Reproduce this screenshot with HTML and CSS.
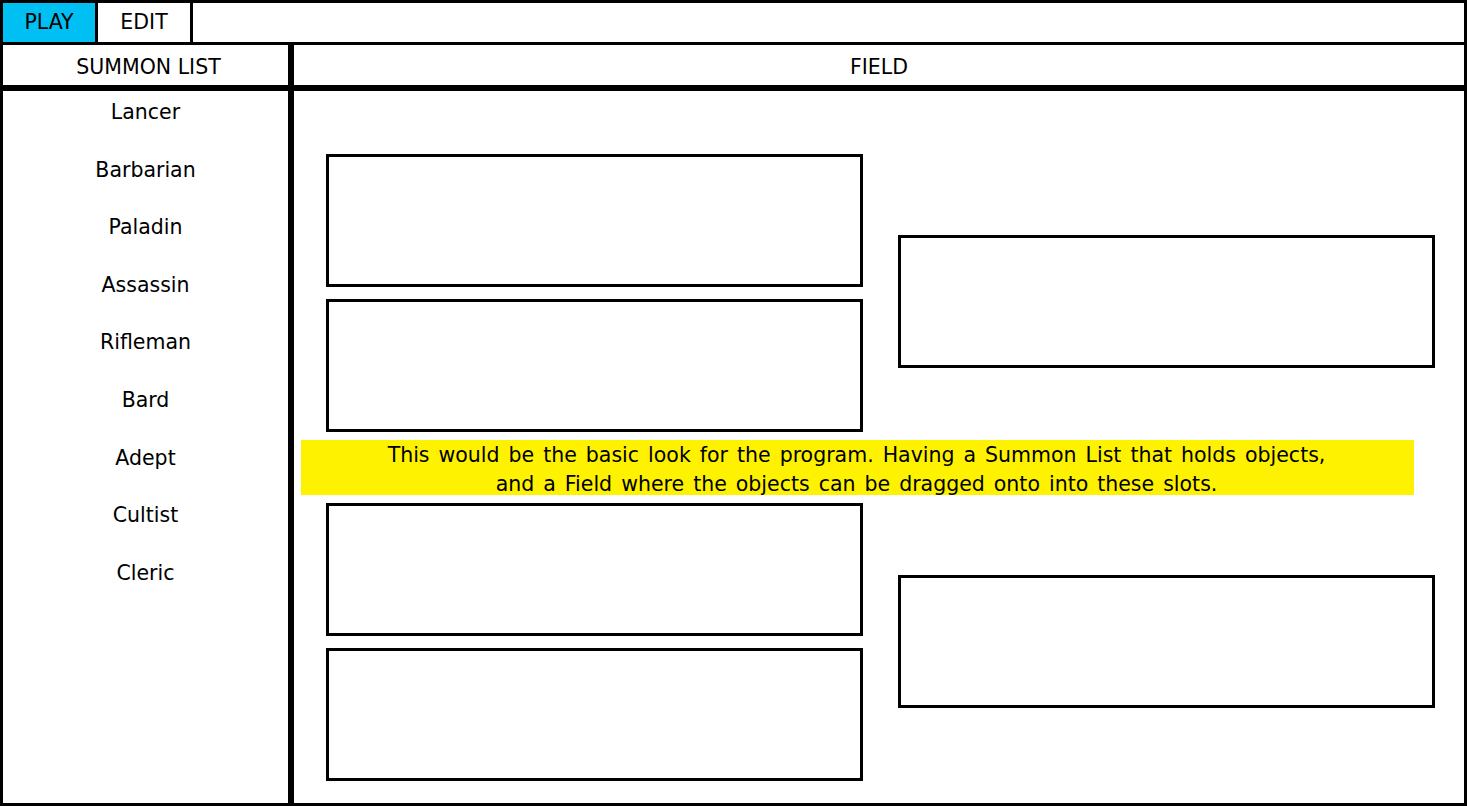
FILE: index.html
```html
<!DOCTYPE html>
<html>
<head>
<meta charset="utf-8">
<link rel="stylesheet" href="styles.css">
</head>
<body>
<div class="app">
  <div class="topbar">
    <div class="tab tab-active">PLAY</div>
    <div class="tab">EDIT</div>
  </div>
  <div class="main">
    <div class="col col-list">
      <div class="header">SUMMON LIST</div>
      <ul class="list">
        <li>Lancer</li>
        <li>Barbarian</li>
        <li>Paladin</li>
        <li>Assassin</li>
        <li>Rifleman</li>
        <li>Bard</li>
        <li>Adept</li>
        <li>Cultist</li>
        <li>Cleric</li>
      </ul>
    </div>
    <div class="col col-field">
      <div class="header">FIELD</div>
      <div class="field">
        <div class="slot-row">
          <div class="slot-stack">
            <div class="slot"></div>
            <div class="slot"></div>
          </div>
          <div class="slot slot-right slot-right-1"></div>
        </div>
        <div class="note">This would be the basic look for the program. Having a Summon List that holds objects,<br>and a Field where the objects can be dragged onto into these slots.</div>
        <div class="slot-row slot-row-2">
          <div class="slot-stack">
            <div class="slot"></div>
            <div class="slot"></div>
          </div>
          <div class="slot slot-right slot-right-2"></div>
        </div>
      </div>
    </div>
  </div>
</div>
</body>
</html>
```

FILE: styles.css
```css
* { box-sizing: border-box; }
html, body { margin: 0; padding: 0; background: #fff; }
body {
  width: 1467px;
  height: 806px;
  overflow: hidden;
  font-family: "DejaVu Sans", "Open Sans", sans-serif;
  color: #000;
}
.app { width: 1467px; height: 806px; display: flex; flex-direction: column; }

.topbar {
  height: 45px;
  border: 3px solid #000;
  display: flex;
}
.tab {
  width: 95px;
  border-right: 3px solid #000;
  display: flex;
  align-items: center;
  justify-content: center;
  font-size: 20.5px;
  padding-bottom: 1px;
}
.tab-active { background: #00bff3; }

.main {
  flex: 1;
  display: flex;
  border: 3px solid #000;
  border-top: 0;
}
.col { display: flex; flex-direction: column; }
.col-list { width: 291px; border-right: 6px solid #000; }
.col-field { flex: 1; }

.header {
  height: 46px;
  border-bottom: 6px solid #000;
  display: flex;
  align-items: center;
  justify-content: center;
  font-size: 20.5px;
  padding-top: 4px;
}
.col-list .header { padding-left: 6px; }

.list {
  list-style: none;
  margin: 0;
  padding: 9px 0 0;
  display: flex;
  flex-direction: column;
  gap: 33.6px;
}
.list li {
  height: 24px;
  line-height: 24px;
  text-align: center;
  font-size: 20.5px;
}

.field {
  flex: 1;
  padding: 63px 0 0 32px;
}
.slot-row { display: flex; }
.slot-stack { display: flex; flex-direction: column; gap: 12px; }
.slot {
  width: 537px;
  height: 133px;
  border: 3px solid #000;
}
.slot-right { margin-left: 35px; }
.slot-right-1 { margin-top: 81px; }
.slot-right-2 { margin-top: 72px; }
.slot-row-2 { margin-top: 8px; }

.note {
  margin: 8px 0 0 -25px;
  width: 1113px;
  height: 55px;
  background: #fff200;
  text-align: center;
  font-size: 20.5px;
  line-height: 29px;
  word-spacing: 2.5px;
  padding-top: 1px;
  padding-right: 2px;
}
```
